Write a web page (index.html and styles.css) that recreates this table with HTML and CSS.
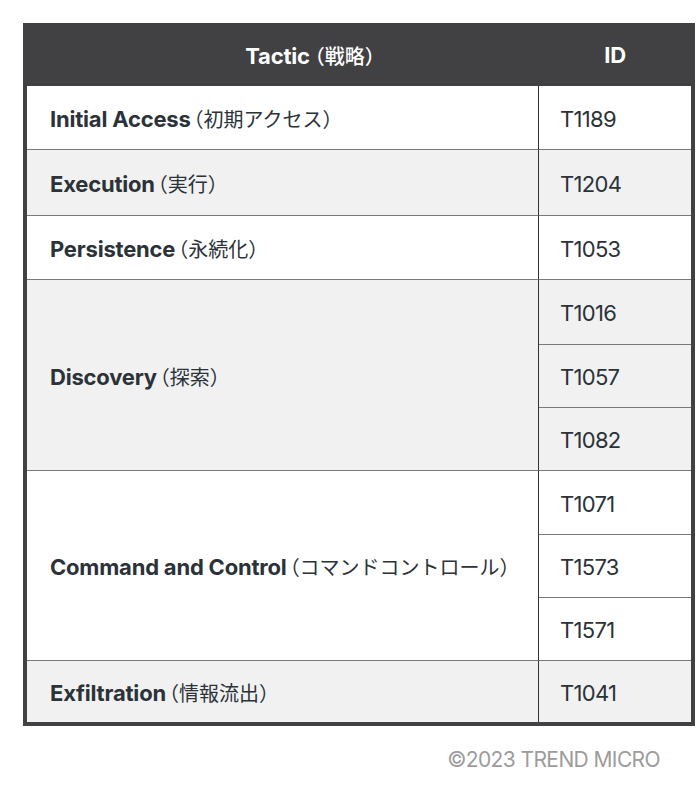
FILE: index.html
```html
<!DOCTYPE html>
<html lang="ja">
<head>
<meta charset="utf-8">
<link rel="stylesheet" href="styles.css">
</head>
<body>
<div class="page">
  <table class="mitre">
    <colgroup><col class="col-tactic"><col class="col-id"></colgroup>
    <thead>
      <tr class="head-row">
        <th class="th-tactic">Tactic<span class="ja ja-head">（戦略）</span></th>
        <th class="th-id">ID</th>
      </tr>
    </thead>
    <tbody>
      <tr class="row light">
        <td class="tactic">Initial Access<span class="ja">（初期アクセス）</span></td>
        <td class="tid">T1189</td>
      </tr>
      <tr class="row shade">
        <td class="tactic">Execution<span class="ja">（実行）</span></td>
        <td class="tid">T1204</td>
      </tr>
      <tr class="row light">
        <td class="tactic">Persistence<span class="ja">（永続化）</span></td>
        <td class="tid">T1053</td>
      </tr>
      <tr class="row shade">
        <td class="tactic" rowspan="3">Discovery<span class="ja">（探索）</span></td>
        <td class="tid">T1016</td>
      </tr>
      <tr class="row shade">
        <td class="tid">T1057</td>
      </tr>
      <tr class="row shade">
        <td class="tid">T1082</td>
      </tr>
      <tr class="row light">
        <td class="tactic" rowspan="3">Command and Control<span class="ja">（コマンドコントロール）</span></td>
        <td class="tid">T1071</td>
      </tr>
      <tr class="row light">
        <td class="tid">T1573</td>
      </tr>
      <tr class="row light">
        <td class="tid">T1571</td>
      </tr>
      <tr class="row shade last">
        <td class="tactic">Exfiltration<span class="ja">（情報流出）</span></td>
        <td class="tid">T1041</td>
      </tr>
    </tbody>
  </table>
  <p class="credit">©2023 TREND MICRO</p>
</div>
</body>
</html>
```

FILE: styles.css
```css
html, body {
  margin: 0;
  padding: 0;
  background: #ffffff;
}

body {
  font-family: Inter, "Noto Sans CJK JP", sans-serif;
  color: #2b3238;
}

.page {
  padding: 23px 5px 0 23px;
  width: 672px;
}

.mitre {
  width: 672px;
  border: 4px solid #414143;
  border-collapse: separate;
  border-spacing: 0;
  table-layout: fixed;
}

.col-tactic {
  width: 512px;
}

.head-row {
  height: 59px;
  background: #414143;
}

.head-row th {
  color: #ffffff;
  font-size: 22px;
  font-weight: 700;
  letter-spacing: -0.2px;
  padding: 0 0 3px 0;
  vertical-align: middle;
}

.th-tactic {
  text-align: center;
  padding-left: 54px !important;
}

.th-id {
  text-align: center;
}

.ja {
  font-family: "Noto Sans CJK JP", sans-serif;
  font-weight: 400;
  font-size: 20px;
  letter-spacing: 0;
  margin-left: 3px;
  font-feature-settings: "halt";
}

.ja-head {
  margin-left: 5px;
  font-weight: 500;
}

.row {
  height: 64px;
}

.row:nth-child(2) {
  height: 66px;
}

.row:nth-child(4) {
  height: 65px;
}

.row:nth-child(5),
.row:nth-child(6),
.row:nth-child(8),
.row:nth-child(9) {
  height: 63px;
}

.row.last {
  height: 61px;
}

.row td {
  padding: 2px 0 0 0;
  border-bottom: 1px solid #7a7a7a;
  vertical-align: middle;
}

.row.last td {
  border-bottom: none;
}

.light td {
  background: #ffffff;
}

.shade td {
  background: #f1f1f1;
}

.tactic {
  border-right: 1px solid #333333;
  padding-left: 23px !important;
  font-size: 22px;
  font-weight: 700;
  letter-spacing: -0.2px;
  white-space: nowrap;
}

.tid {
  padding-left: 21px !important;
  font-size: 22px;
  font-weight: 400;
  letter-spacing: -0.7px;
}

.credit {
  margin: 21px 0 0 0;
  padding-right: 35px;
  text-align: right;
  font-size: 21px;
  line-height: 26px;
  color: #9c9c9c;
  letter-spacing: -0.6px;
}
```
